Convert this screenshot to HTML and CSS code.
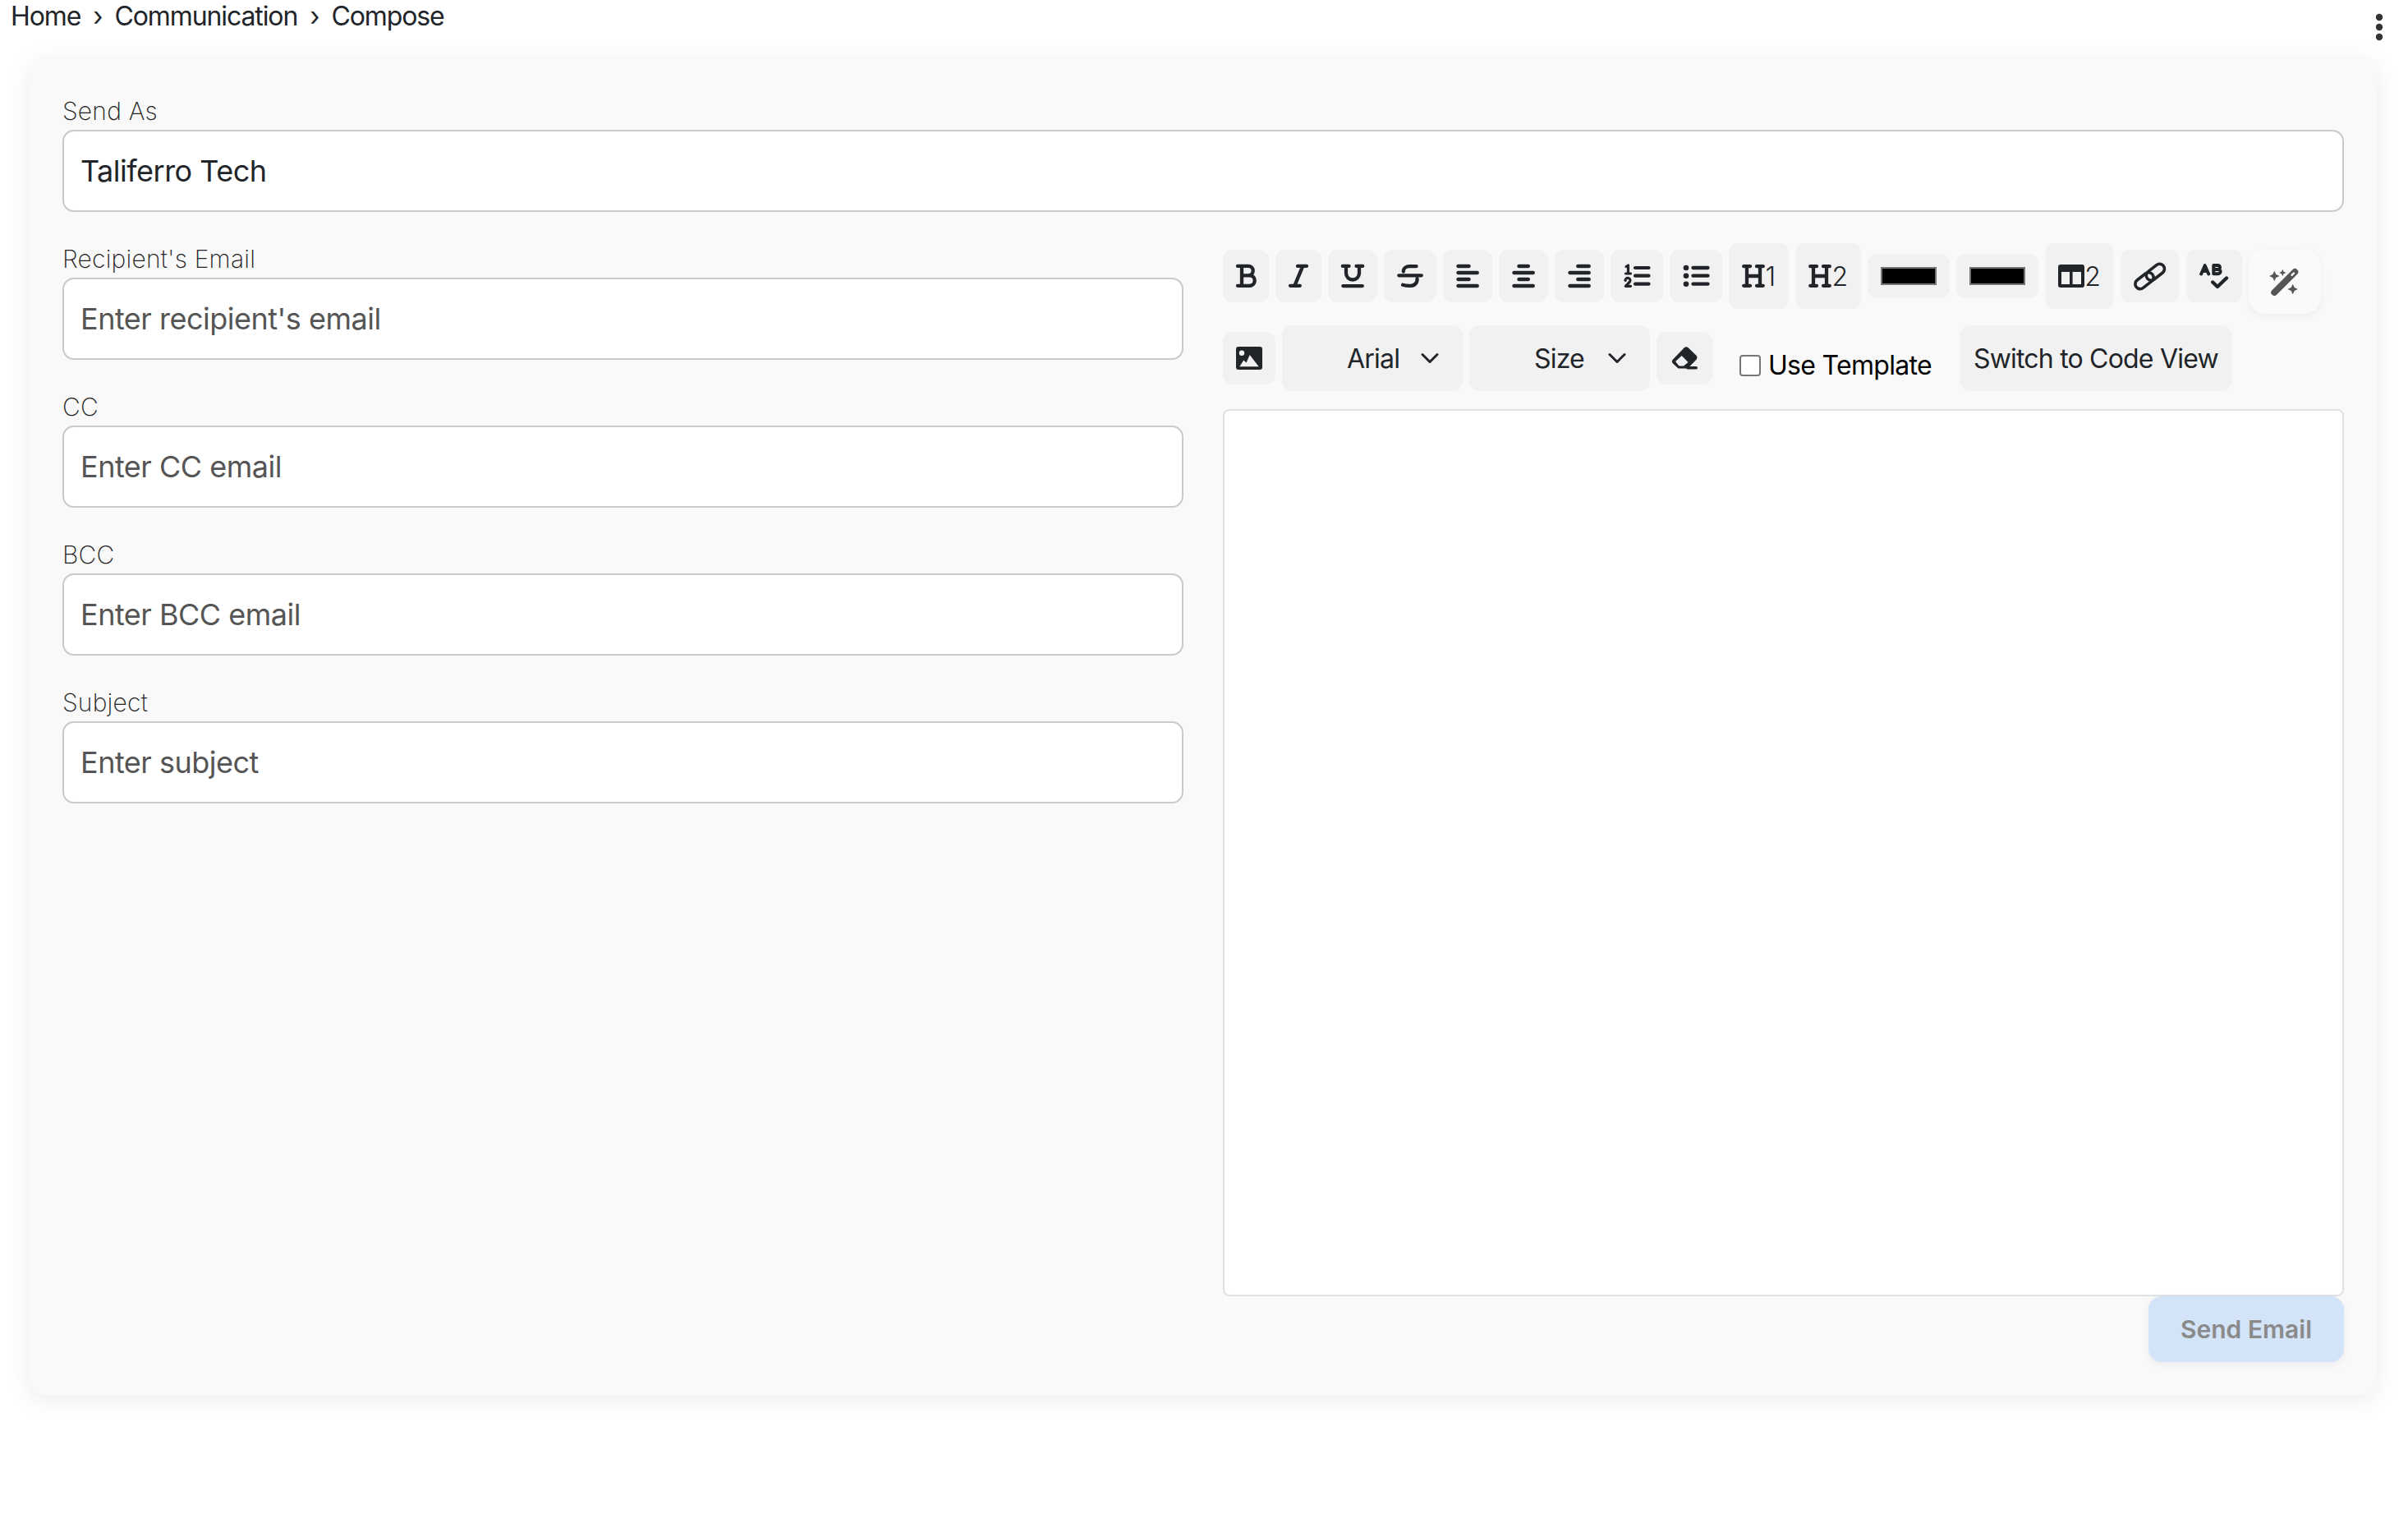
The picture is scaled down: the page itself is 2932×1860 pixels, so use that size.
FILE: index.html
```html
<!DOCTYPE html>
<html lang="en">
<head>
<meta charset="utf-8">
<title>Compose</title>
<link rel="stylesheet" href="styles.css">
</head>
<body>
<header class="topbar">
  <nav class="crumbs"><span>Home</span><span class="sep">›</span><span>Communication</span><span class="sep">›</span><span>Compose</span></nav>
  <svg class="kebab" width="10" height="36" viewBox="0 0 10 36"><circle cx="5" cy="5" r="4.2"/><circle cx="5" cy="17" r="4.2"/><circle cx="5" cy="29" r="4.2"/></svg>
</header>
<main class="card">
  <div class="field send-as">
    <label class="field-label">Send As</label>
    <input class="text-input filled" type="text" value="Taliferro Tech">
  </div>
  <div class="columns">
    <div class="left-col">
      <div class="field"><label class="field-label">Recipient's Email</label><input class="text-input" type="text" placeholder="Enter recipient's email"></div>
      <div class="field"><label class="field-label">CC</label><input class="text-input" type="text" placeholder="Enter CC email"></div>
      <div class="field"><label class="field-label">BCC</label><input class="text-input" type="text" placeholder="Enter BCC email"></div>
      <div class="field"><label class="field-label">Subject</label><input class="text-input" type="text" placeholder="Enter subject"></div>
    </div>
    <div class="right-col">
      <div class="toolbar-row">
        <button class="tool"><svg class="ico" width="32" height="32" viewBox="0 0 32 32"><path d="M6 3.9H19a5.7 5.7 0 0 1 0 11.4H11M11 15.3H20.5a6.25 6.25 0 0 1 0 12.5H6M11 3.9V27.8"/></svg></button>
        <button class="tool"><svg class="ico" width="32" height="32" viewBox="0 0 32 32"><path d="M15 3.9H26M6 27.8H17.8M21.3 3.9L11.3 27.8"/></svg></button>
        <button class="tool"><svg class="ico" width="36" height="32" viewBox="0 0 36 32"><path d="M5.8 3.9H13.5M22.5 3.9H30.2M10 3.9V12.5a8 8 0 0 0 16 0V3.9M6.3 28.1H29.8"/></svg></button>
        <button class="tool"><svg class="ico" width="40" height="32" viewBox="0 0 40 32"><path d="M27.5 4.2H19.5C15 4.2 11.8 6.5 11.8 10.5M6.3 15.3H33.8M11 26.8Q16 28.2 21 27.8a7.5 7.5 0 0 0 7.5-8.5"/></svg></button>
        <button class="tool"><svg class="ico" width="36" height="32" viewBox="0 0 36 32"><path d="M6.4 4H19.6M6.4 12H29.8M6.4 20H19.6M6.4 28H29.8"/></svg></button>
        <button class="tool"><svg class="ico" width="36" height="32" viewBox="0 0 36 32"><path d="M12.4 4H23.9M6.4 12H29.8M12.4 20H23.9M6.4 28H29.8"/></svg></button>
        <button class="tool"><svg class="ico" width="36" height="32" viewBox="0 0 36 32"><path d="M16.2 4H29.8M6.4 12H29.8M16.2 20H29.8M6.4 28H29.8"/></svg></button>
        <button class="tool"><svg class="ico ico-thin" width="40" height="32" viewBox="0 0 40 32"><path d="M7 4.5L9.5 3V12.5M6.5 13H12.5M6 21.5a3 3 0 1 1 5.3 1.7L6.3 28.3H12.5"/><path class="thick" d="M18 6H34.5M18 15.7H34.5M18 25.7H34.5"/></svg></button>
        <button class="tool"><svg class="ico" width="40" height="32" viewBox="0 0 40 32"><path d="M16.5 6H34.5M16.5 15.7H34.5M16.5 25.7H34.5"/><circle class="dot" cx="8" cy="6" r="3.3"/><circle class="dot" cx="8" cy="15.7" r="3.3"/><circle class="dot" cx="8" cy="25.7" r="3.3"/></svg></button>
        <button class="tool tall"><svg class="ico" width="28" height="28" viewBox="0 0 28 28"><path d="M2.2 2.2H10M18 2.2H25.8M2.2 25.8H10M18 25.8H25.8M6 2.2V25.8M22 2.2V25.8M6 14H22"/></svg><span class="digit heading-digit">1</span></button>
        <button class="tool tall"><svg class="ico" width="28" height="28" viewBox="0 0 28 28"><path d="M2.2 2.2H10M18 2.2H25.8M2.2 25.8H10M18 25.8H25.8M6 2.2V25.8M22 2.2V25.8M6 14H22"/></svg><span class="digit heading-digit">2</span></button>
        <button class="tool swatch-btn"><span class="swatch"></span></button>
        <button class="tool swatch-btn"><span class="swatch"></span></button>
        <button class="tool tall"><svg class="solid" width="32" height="28" viewBox="0 0 32 28"><path fill-rule="evenodd" d="M3 0H29a3 3 0 0 1 3 3V25a3 3 0 0 1-3 3H3a3 3 0 0 1-3-3V3a3 3 0 0 1 3-3ZM4 9V24H14V9ZM17.6 9V24H28V9Z"/></svg><span class="digit">2</span></button>
        <button class="tool wide"><svg class="link" width="40" height="32" viewBox="0 0 40 32"><rect x="-12.5" y="-6" width="25" height="12" rx="6" transform="translate(13 21.7) rotate(-38)"/><rect x="-12.5" y="-6" width="25" height="12" rx="6" transform="translate(26.4 11.3) rotate(-38)"/></svg></button>
        <button class="tool wide"><svg class="ico ico-ab" width="36" height="32" viewBox="0 0 36 32"><path d="M2.2 13.5L6.7 3.2L11.2 13.5M4 10H9.5M17.3 3H22.5a2.5 2.5 0 0 1 0 5H17.3M17.3 8H23a2.6 2.6 0 0 1 0 5.2H17.3ZM17.3 3V13.2"/><path class="check" d="M16.2 23.5L22 29L33 18.5"/></svg></button>
        <button class="tool wand-btn"><svg class="wand" width="40" height="40" viewBox="0 0 40 40"><path class="wand-stem" d="M7.3 33L32.3 8"/><path class="wand-tip" d="M31 9.5L28.6 11.9"/><path class="wand-spark" d="M7.3 6.7L9.3 11L13.6 13L9.3 15L7.3 19.3L5.3 15L1 13L5.3 11ZM17.3 4.8L18.6 7.7L21.5 9L18.6 10.3L17.3 13.2L16 10.3L13.1 9L16 7.7ZM29.7 22.7L31.7 27L36 29L31.7 31L29.7 35.3L27.7 31L23.4 29L27.7 27Z"/></svg></button>
      </div>
      <div class="toolbar-row">
        <button class="tool wide"><svg class="solid" width="32" height="28" viewBox="0 0 32 28"><path fill-rule="evenodd" d="M3 0H29a3 3 0 0 1 3 3V25a3 3 0 0 1-3 3H3a3 3 0 0 1-3-3V3a3 3 0 0 1 3-3ZM7 4.5a3.2 3.2 0 1 0 0 6.4a3.2 3.2 0 0 0 0-6.4ZM4.3 24.3H27.7L16.7 10L12.5 19.5L9.3 16.5Z"/></svg></button>
        <button class="tool select"><span>Arial</span><svg class="chev" width="22" height="14" viewBox="0 0 22 14"><path d="M2 2.5L11 11.5L20 2.5"/></svg></button>
        <button class="tool select"><span>Size</span><svg class="chev" width="22" height="14" viewBox="0 0 22 14"><path d="M2 2.5L11 11.5L20 2.5"/></svg></button>
        <button class="tool wider"><svg class="solid" width="32" height="28" viewBox="0 0 32 28"><path fill-rule="evenodd" d="M16 1Q18.2-.5 20.4 1L30.7 11Q32.5 13.3 30.7 15.6L20 26.5H8.5L2 20.5Q-.3 18 2 15.5ZM5 18L12.7 11L20.5 19L15 23.5H9.5Z"/><rect x="18" y="24" width="14" height="3.6" rx="1.8"/></svg></button>
        <label class="use-template"><input class="check-box" type="checkbox"><span>Use Template</span></label>
        <button class="tool code-btn">Switch to Code View</button>
      </div>
      <div class="editor"></div>
      <div class="actions"><button class="send">Send Email</button></div>
    </div>
  </div>
</main>
</body>
</html>
```

FILE: styles.css
```css
* { box-sizing: border-box; }
html, body { margin: 0; padding: 0; background: #fff; }
body { font-family: Inter, "Liberation Sans", sans-serif; color: #212529; min-height: 1860px; }
.topbar { display: flex; justify-content: space-between; align-items: flex-start; height: 70px; padding: 0 30px 0 13px; }
.crumbs { display: flex; gap: 15px; font-size: 32px; line-height: 40px; letter-spacing: -1.1px; }
.kebab { fill: #333; margin-top: 16px; }
.card { margin: 0 38px 0 36px; padding: 52px 40px 40px; background: #f9f9f9; border-radius: 20px; box-shadow: 0 6px 30px rgba(0,0,0,.08); }
.field { display: flex; flex-direction: column; }
.send-as { margin-bottom: 38px; }
.field-label { height: 36px; font-size: 30px; line-height: 26px; font-weight: 200; letter-spacing: 0.2px; color: #222; }
.text-input { height: 100px; width: 100%; padding: 0 20px; border: 2px solid #c9c9c9; border-radius: 14px; background: #fff; font: 400 36px Inter, sans-serif; letter-spacing: -0.5px; color: #212529; }
.text-input::placeholder { color: #555; opacity: 1; }
.columns { display: grid; grid-template-columns: 1fr 1fr; column-gap: 48px; }
.left-col { display: flex; flex-direction: column; gap: 44px; padding-top: 6px; }
.right-col { display: flex; flex-direction: column; }
.toolbar-row { display: flex; align-items: center; gap: 8px; height: 80px; margin-bottom: 20px; }
.toolbar-row + .toolbar-row { margin-bottom: 22px; }
.tool { display: flex; align-items: center; justify-content: center; height: 64px; padding: 0 12px; border: 0; border-radius: 12px; background: #f1f1f1; color: #212529; font: 400 32px Inter, sans-serif; letter-spacing: -0.8px; }
.tool.wide { padding: 0 16px; }
.tool.wider { padding: 0 18px; }
.tool.tall { height: 80px; padding: 0 16px; }
.digit { font-size: 32px; font-weight: 300; letter-spacing: 0; }
.heading-digit { margin-left: 0.5px; }
.ico { fill: none; stroke: #212529; stroke-width: 4.3; stroke-linecap: round; stroke-linejoin: round; }
.ico .dot { fill: #212529; stroke: none; }
.ico-thin { stroke-width: 3.2; }
.ico-thin .thick { stroke-width: 4.2; }
.ico-ab { stroke-width: 4; }
.ico-ab .check { stroke-width: 4.4; }
.link { fill: none; stroke: #212529; stroke-width: 3.6; overflow: visible; }
.solid { fill: #212529; overflow: visible; }
.swatch-btn { width: 100px; height: 54px; padding: 0; }
.swatch { display: block; width: 68px; height: 22px; background: #000; border: 2px solid #767676; }
.wand-btn { align-self: flex-start; margin-top: 8px; width: 88px; height: 78px; padding: 0; background: #f9fafb; border-radius: 20px; box-shadow: 0 3px 10px rgba(0,0,0,.05); }
.wand-stem, .wand-tip { fill: none; stroke-linecap: round; }
.wand-stem { stroke: #555; stroke-width: 8; }
.wand-tip { stroke: #f9fafb; stroke-width: 2.4; }
.wand-spark { fill: #555; }
.select { width: 220px; height: 80px; padding: 0 29px 0 79px; justify-content: space-between; }
.chev { fill: none; stroke: #212529; stroke-width: 3; stroke-linecap: round; stroke-linejoin: round; }
.use-template { display: flex; align-items: center; gap: 9px; margin: 18px 27px 0 25px; font-size: 32px; line-height: 40px; letter-spacing: -0.7px; color: #000; white-space: nowrap; }
.check-box { appearance: none; width: 26px; height: 26px; margin: 0; background: #fff; border: 2px solid #767676; border-radius: 4px; }
.code-btn { height: 80px; padding: 0 16px; white-space: nowrap; }
.editor { height: 1080px; background: #fff; border: 2px solid #dee2e6; border-radius: 8px; }
.actions { display: flex; justify-content: flex-end; }
.send { width: 238px; height: 80px; border: 0; border-radius: 16px; background: #d3e3f8; color: #8a8a8a; font: 600 30px Inter, sans-serif; box-shadow: 0 3px 10px rgba(0,0,0,.06); }
```
